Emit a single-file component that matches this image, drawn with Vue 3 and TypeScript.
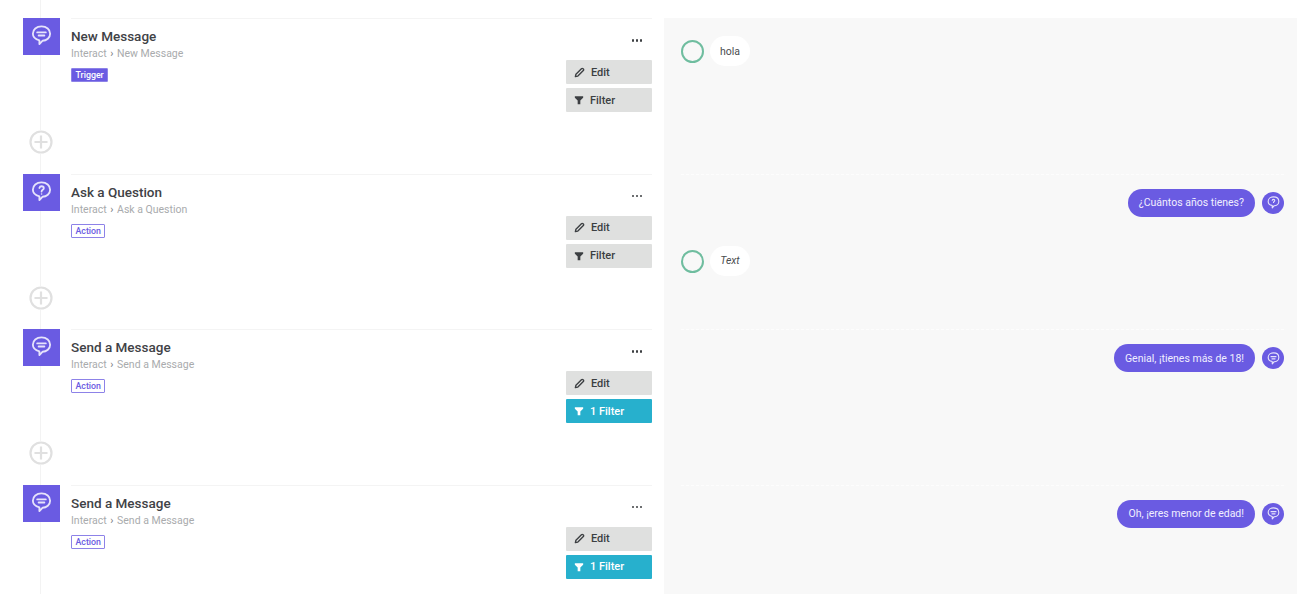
<script setup lang="ts">
type Step = {
  title: string;
  icon: 'message' | 'question';
  badge: string;
  filters: number;
};

const steps: Step[] = [
  { title: 'New Message', icon: 'message', badge: 'Trigger', filters: 0 },
  { title: 'Ask a Question', icon: 'question', badge: 'Action', filters: 0 },
  { title: 'Send a Message', icon: 'message', badge: 'Action', filters: 1 },
  { title: 'Send a Message', icon: 'message', badge: 'Action', filters: 1 },
];
</script>

<template>
  <div class="page">
    <div class="flow">
      <section v-for="(step, i) in steps" :key="i" class="step">
        <div class="rail">
          <div class="tile">
            <svg class="balloon" viewBox="0 0 24 24" fill="none" stroke="#e6e3fb" stroke-width="1.9">
              <path d="M12 2.5c5.3 0 9 3.2 9 7.600 0 4.300-3.700 7.400-8 7.400l-3.200 3.500v-3.900C6 16 3 13.600 3 10.100 3 5.700 6.700 2.500 12 2.500z" stroke-linejoin="round" />
              <template v-if="step.icon === 'message'">
                <path d="M7.500 8.800h9M9 12h6" stroke-linecap="round" />
              </template>
              <template v-else>
                <path d="M9.800 8.300c.3-1.200 1.200-1.800 2.300-1.800 1.300 0 2.300.8 2.300 2 0 1.700-2.300 1.800-2.300 3.500" stroke-linecap="round" />
                <circle cx="12.100" cy="14.500" r=".8" fill="#e6e3fb" stroke="none" />
              </template>
            </svg>
          </div>
          <div v-if="i < steps.length - 1" class="plus">
            <svg viewBox="0 0 24 24" fill="none" stroke="#e0e0e0" stroke-width="2.200">
              <circle cx="12" cy="12" r="10.500" />
              <path d="M12 5.500v13M5.500 12h13" />
            </svg>
          </div>
        </div>
        <div class="card">
          <div class="info">
            <h3 class="title">{{ step.title }}</h3>
            <p class="crumb">Interact <span class="chev">›</span> {{ step.title }}</p>
            <span class="badge" :class="{ 'badge--solid': step.badge === 'Trigger' }">{{ step.badge }}</span>
          </div>
          <div class="actions">
            <div class="dots"><i /><i /><i /></div>
            <button class="btn">
              <svg class="btn__icon" viewBox="0 0 12 12" fill="none" stroke="#3c3f42" stroke-width="1.500">
                <path d="M1.500 10.500l.6-2.700 6-6a1.200 1.200 0 0 1 1.700 0l.4.4a1.200 1.200 0 0 1 0 1.700l-6 6z" stroke-linejoin="round" />
              </svg>
              Edit
            </button>
            <button class="btn" :class="{ 'btn--active': step.filters > 0 }">
              <svg class="btn__icon btn__icon--filter" viewBox="0 0 12 12" fill="currentColor">
                <path d="M1 1.500h10v1.800L7.600 6.500V11H4.400V6.500L1 3.300z" />
              </svg>
              {{ step.filters > 0 ? `${step.filters} Filter` : 'Filter' }}
            </button>
          </div>
        </div>
      </section>
    </div>

    <div class="chat">
      <section class="turn">
        <div class="msg">
          <span class="avatar" />
          <span class="bubble">hola</span>
        </div>
      </section>
      <section class="turn">
        <div class="msg msg--bot">
          <span class="bubble bubble--bot">¿Cuántos años tienes?</span>
          <span class="bot-icon">
            <svg viewBox="0 0 24 24" fill="none" stroke="#e6e3fb" stroke-width="1.800">
              <path d="M12 3c5 0 8.500 3 8.500 7.200 0 4-3.500 7-7.500 7l-3 3.300v-3.700C6.500 16 3.500 13.600 3.500 10.200 3.500 6 7 3 12 3z" stroke-linejoin="round" />
              <path d="M10 8.500c.3-1 1-1.500 2-1.500 1.200 0 2 .7 2 1.800 0 1.500-2 1.600-2 3.200" stroke-linecap="round" />
            </svg>
          </span>
        </div>
        <div class="msg msg--second">
          <span class="avatar" />
          <span class="bubble bubble--italic">Text</span>
        </div>
      </section>
      <section class="turn">
        <div class="msg msg--bot">
          <span class="bubble bubble--bot">Genial, ¡tienes más de 18!</span>
          <span class="bot-icon">
            <svg viewBox="0 0 24 24" fill="none" stroke="#e6e3fb" stroke-width="1.800">
              <path d="M12 3c5 0 8.500 3 8.500 7.200 0 4-3.500 7-7.500 7l-3 3.300v-3.700C6.500 16 3.500 13.600 3.500 10.200 3.500 6 7 3 12 3z" stroke-linejoin="round" />
              <path d="M8 9h8M9.500 12.500h5" stroke-linecap="round" />
            </svg>
          </span>
        </div>
      </section>
      <section class="turn">
        <div class="msg msg--bot">
          <span class="bubble bubble--bot">Oh, ¡eres menor de edad!</span>
          <span class="bot-icon">
            <svg viewBox="0 0 24 24" fill="none" stroke="#e6e3fb" stroke-width="1.800">
              <path d="M12 3c5 0 8.500 3 8.500 7.200 0 4-3.500 7-7.500 7l-3 3.300v-3.700C6.500 16 3.500 13.600 3.500 10.200 3.500 6 7 3 12 3z" stroke-linejoin="round" />
              <path d="M8 9h8M9.500 12.500h5" stroke-linecap="round" />
            </svg>
          </span>
        </div>
      </section>
    </div>
  </div>
</template>

<style>
html,
body {
  margin: 0;
  background: #fff;
  overflow: hidden;
}
</style>

<style scoped>
.page {
  display: grid;
  grid-template-columns: 664px 1fr;
  height: 594px;
  overflow: hidden;
  font-family: Roboto, 'Liberation Sans', sans-serif;
  color: #3c3f42;
}

.flow {
  padding-top: 18px;
  position: relative;
}

.flow::before {
  content: '';
  position: absolute;
  left: 40px;
  top: 0;
  bottom: 0;
  width: 1px;
  background: #f3f3f3;
}

.step {
  display: flex;
  height: 155.67px;
  position: relative;
}

.rail {
  width: 71px;
  flex: none;
  padding-left: 23px;
  box-sizing: border-box;
}

.tile {
  width: 37px;
  height: 37px;
  background: #6a5be2;
  display: flex;
  align-items: center;
  justify-content: center;
}

.balloon {
  width: 23px;
  height: 23px;
  margin-bottom: 2px;
}

.plus {
  position: absolute;
  left: 29px;
  top: 112px;
  width: 24px;
  height: 24px;
  background: #fff;
  border-radius: 50%;
}

.plus svg {
  display: block;
  width: 24px;
  height: 24px;
}

.card {
  width: 581px;
  display: flex;
  justify-content: space-between;
  border-top: 1px solid #f4f4f4;
  box-sizing: border-box;
  height: 100%;
}

.title {
  margin: 9px 0 0;
  font-size: 13.5px;
  line-height: 17px;
  font-weight: 500;
  color: #3f4246;
}

.crumb {
  margin: 1px 0 0;
  font-size: 10.5px;
  line-height: 15px;
  color: #a9abad;
}

.chev {
  color: #77797c;
  margin: 0 1px;
}

.badge {
  display: inline-block;
  margin-top: 7px;
  height: 14px;
  line-height: 12px;
  padding: 0 3.5px;
  box-sizing: border-box;
  border: 1px solid #8d82e8;
  border-radius: 1px;
  font-size: 8.8px;
  font-weight: 500;
  color: #6a5be2;
}

.badge--solid {
  background: #6a5be2;
  color: #fff;
}

.actions {
  width: 86px;
  display: flex;
  flex-direction: column;
  gap: 4px;
}

.dots {
  height: 37px;
  display: flex;
  gap: 1.500px;
  justify-content: flex-end;
  align-items: flex-start;
  padding: 20px 10px 0 0;
  box-sizing: border-box;
}

.dots i {
  width: 2.500px;
  height: 2.500px;
  background: #3c3f42;
  border-radius: 50%;
}

.btn {
  display: flex;
  align-items: center;
  gap: 6px;
  height: 24px;
  padding: 0 0 0 8px;
  border: 0;
  border-radius: 1px;
  background: #dfe0df;
  color: #3c3f42;
  font: 500 11px Roboto, 'Liberation Sans', sans-serif;
}

.btn--active {
  background: #27b0cd;
  color: #fff;
}

.btn__icon {
  width: 11px;
  height: 11px;
  flex: none;
}

.btn__icon--filter {
  width: 10px;
  height: 10px;
}

.chat {
  background: #f8f8f8;
  margin-top: 18px;
  padding: 0 13px 0 17px;
}

.turn {
  height: 155.67px;
  box-sizing: border-box;
  padding-top: 14px;
  border-top: 1px dashed #fdfdfd;
}

.turn:first-child {
  padding-top: 18px;
  border-top: 0;
}

.msg {
  display: flex;
  align-items: center;
  gap: 6px;
  height: 30px;
}

.msg--bot {
  justify-content: flex-end;
  gap: 7px;
  height: 28px;
}

.msg--second {
  margin-top: 30px;
}

.avatar {
  width: 23px;
  height: 23px;
  box-sizing: border-box;
  border: 2px solid #6fbd9f;
  border-radius: 50%;
  flex: none;
}

.bubble {
  display: flex;
  align-items: center;
  justify-content: center;
  min-width: 40px;
  box-sizing: border-box;
  height: 30px;
  padding: 0 10px;
  background: #fff;
  border-radius: 15px;
  font-size: 10.5px;
  color: #4a4d50;
}

.bubble--italic {
  font-style: italic;
  margin-top: -2px;
}

.bubble--bot {
  height: 28px;
  padding: 0 11px;
  border-radius: 14px;
  background: #6a5be2;
  color: #f1efff;
  font-size: 10.5px;
}

.bot-icon {
  width: 22px;
  height: 22px;
  border-radius: 50%;
  background: #6a5be2;
  display: flex;
  align-items: center;
  justify-content: center;
  flex: none;
}

.bot-icon svg {
  width: 15px;
  height: 15px;
}
</style>
